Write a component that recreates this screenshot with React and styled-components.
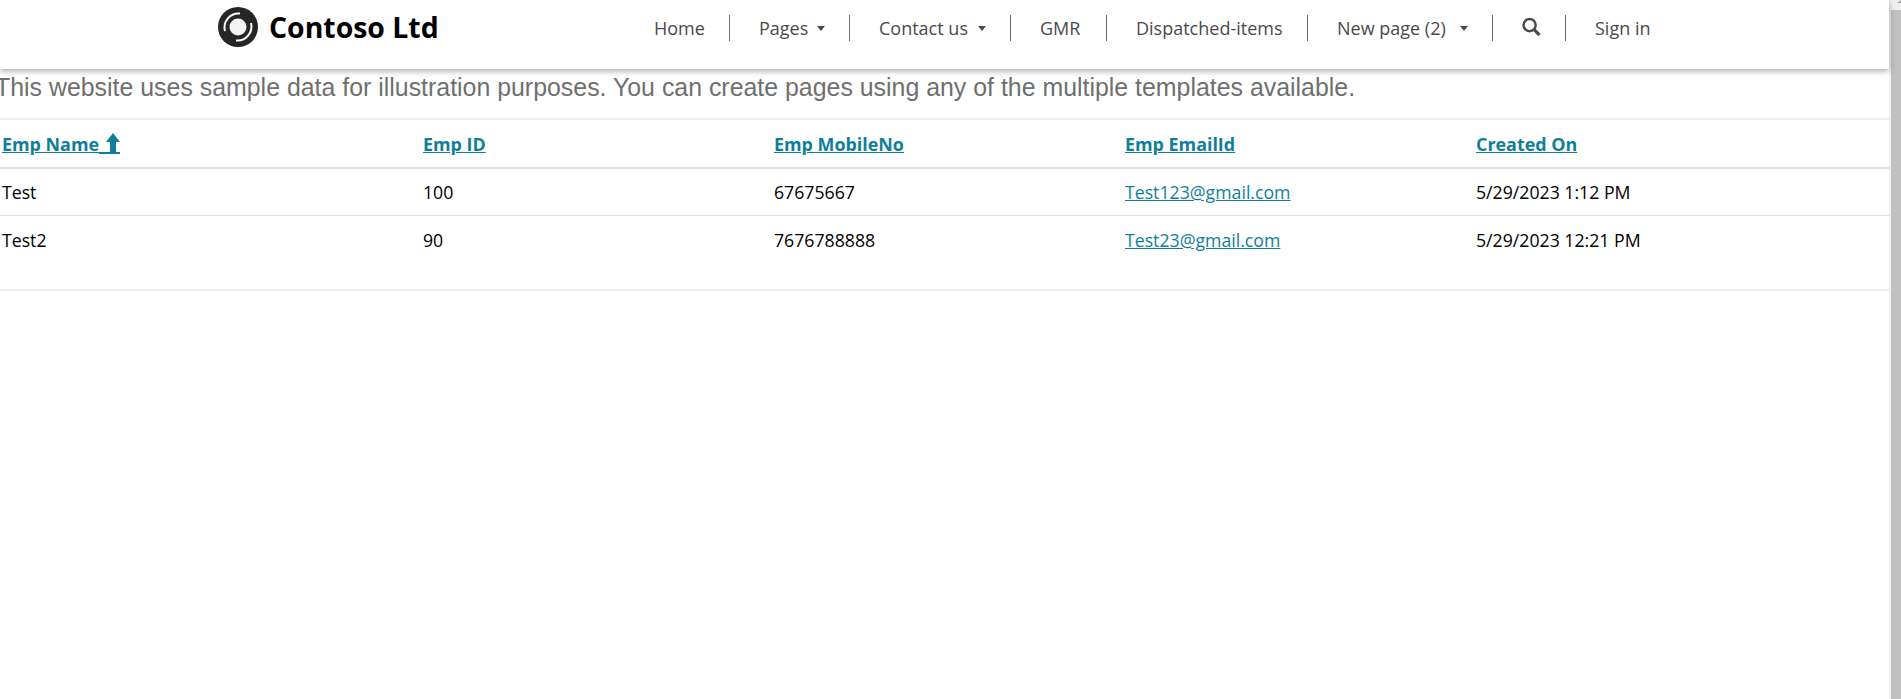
import React from "react";
import styled, { createGlobalStyle } from "styled-components";

const Global = createGlobalStyle`
  html, body { margin: 0; padding: 0; height: 100%; overflow: hidden; background: #fff; }
  body { font-family: "Open Sans", "Noto Sans", sans-serif; font-size: 17.7px; line-height: 22px; color: #000; }
`;

const Page = styled.div`display: flex; width: 1901px; height: 699px; overflow: hidden;`;
const Main = styled.main`flex: 1; min-width: 0;`;

const ScrollTrack = styled.div`
  width: 12px; flex: none; background: #f1f1f1; display: flex; flex-direction: column; align-items: flex-end;
`;
const ScrollArrow = styled.div`
  width: 0; height: 0; margin: 0 0 7px; border-left: 4px solid transparent;
  border-bottom: 3px solid #a3a3a3;
`;
const ScrollThumb = styled.div`width: 10px; flex: 1; background: #c1c1c1;`;

const Header = styled.header`
  height: 69px; display: flex; align-items: flex-start; background: #fff;
  box-shadow: 0 2px 6px rgba(60, 60, 70, 0.45); position: relative; padding-left: 218px;
`;
const Brand = styled.a`display: flex; align-items: center; gap: 11px; height: 54px; width: 436px;`;
const BrandName = styled.span`font-size: 28.4px; font-weight: 700; color: #000; line-height: 54px; white-space: nowrap;`;

const Nav = styled.ul`display: flex; list-style: none; margin: 15px 0 0; padding: 0;`;
const NavItem = styled.li`
  box-sizing: border-box; width: ${(p) => (p.$w ? `${p.$w}px` : "auto")};
  height: 26px; display: flex; align-items: center; padding: 0 24px 0 29px;
  border-right: ${(p) => (p.$last ? "none" : "1px solid #6b6b6b")};
  font-size: 18px; font-weight: 500; color: #4a4a4a; white-space: nowrap;
  &:first-child { padding-left: 0; }
`;
const Caret = styled.span`margin-left: auto; width: 0; height: 0; border-left: 4.5px solid transparent; border-right: 4.5px solid transparent; border-top: 5px solid #4a4a4a; margin-top: 1px;`;

const Notice = styled.p`
  margin: 6px 0 0 -5px; font-family: "Liberation Sans", Arial, sans-serif; font-size: 24.9px; line-height: 25px;
  color: #6f6f6f; white-space: nowrap; height: 24px;
`;

const Table = styled.div`margin-top: 19px; border-top: 2px solid #eee; border-bottom: 2px solid #eee;`;
const Row = styled.div`
  display: grid; grid-template-columns: 421px 351px 351px 351px 1fr; padding-left: 2px; align-items: center;
  height: ${(p) => p.$h}px; border-bottom: ${(p) => p.$line || "none"};
`;
const HeadLink = styled.a`color: #0e7f9b; font-weight: 700; text-decoration: underline; display: inline-flex; align-items: flex-end; justify-self: start; font-size: 17.9px;`;
const MailLink = styled.a`color: #0e7f9b; text-decoration: underline; justify-self: start;`;
const Cell = styled.span``;
const LastRow = styled(Row)`align-items: start; padding-top: 13px; height: 60px;`;
const SortArrow = styled.svg`width: 21px; height: 21px; margin-bottom: 1px; color: #0e7f9b; fill: currentColor;`;
const SearchGlyph = styled.svg`width: 20px; height: 19px; margin-top: -4px;`;

const Logo = () => (
  <svg width="40" height="40" viewBox="0 0 40 40">
    <circle cx="20" cy="20" r="20" fill="#262626" />
    <circle cx="20" cy="20" r="8.5" fill="#f4f4f4" />
    <path d="M7 24 A14 14 0 0 1 22 6.5" fill="none" stroke="#fff" strokeWidth="2" />
    <path d="M33 16 A14 14 0 0 1 18 33.5" fill="none" stroke="#fff" strokeWidth="2" />
  </svg>
);

const SearchIcon = () => (
  <SearchGlyph viewBox="0 0 20 19">
    <circle cx="8" cy="8" r="6.4" fill="none" stroke="#4a4a4a" strokeWidth="2.6" />
    <path d="M12.5 12.5 L18.5 18.5" stroke="#4a4a4a" strokeWidth="3.4" />
  </SearchGlyph>
);

const columns = ["Emp ID", "Emp MobileNo", "Emp EmailId", "Created On"];
const rows = [
  ["Test", "100", "67675667", "Test123@gmail.com", "5/29/2023 1:12 PM"],
  ["Test2", "90", "7676788888", "Test23@gmail.com", "5/29/2023 12:21 PM"],
];

export default function App() {
  return (
    <Page>
      <Global />
      <Main>
        <Header>
          <Brand>
            <Logo />
            <BrandName>Contoso Ltd</BrandName>
          </Brand>
          <Nav>
            <NavItem $w={76}>Home</NavItem>
            <NavItem $w={120}>Pages <Caret /></NavItem>
            <NavItem $w={161}>Contact us <Caret /></NavItem>
            <NavItem $w={96}>GMR</NavItem>
            <NavItem $w={201}>Dispatched-items</NavItem>
            <NavItem $w={185}>New page (2) <Caret /></NavItem>
            <NavItem $w={73}><SearchIcon /></NavItem>
            <NavItem $last>Sign in</NavItem>
          </Nav>
        </Header>
        <Notice>This website uses sample data for illustration purposes. You can create pages using any of the multiple templates available.</Notice>
        <Table>
          <Row $h={47} $line="2px solid #ddd">
            <HeadLink>
              Emp Name
              <SortArrow viewBox="0 0 21 21">
                <path d="M14 0 L21 9 H17 V19 H11 V9 H7 Z" />
                <rect x="0" y="19" width="21" height="2" />
              </SortArrow>
            </HeadLink>
            {columns.map((c) => <HeadLink key={c}>{c}</HeadLink>)}
          </Row>
          <Row $h={46} $line="1px solid #ddd">
            <Cell>{rows[0][0]}</Cell><Cell>{rows[0][1]}</Cell><Cell>{rows[0][2]}</Cell>
            <MailLink>{rows[0][3]}</MailLink><Cell>{rows[0][4]}</Cell>
          </Row>
          <LastRow>
            <Cell>{rows[1][0]}</Cell><Cell>{rows[1][1]}</Cell><Cell>{rows[1][2]}</Cell>
            <MailLink>{rows[1][3]}</MailLink><Cell>{rows[1][4]}</Cell>
          </LastRow>
        </Table>
      </Main>
      <ScrollTrack>
        <ScrollArrow />
        <ScrollThumb />
      </ScrollTrack>
    </Page>
  );
}
